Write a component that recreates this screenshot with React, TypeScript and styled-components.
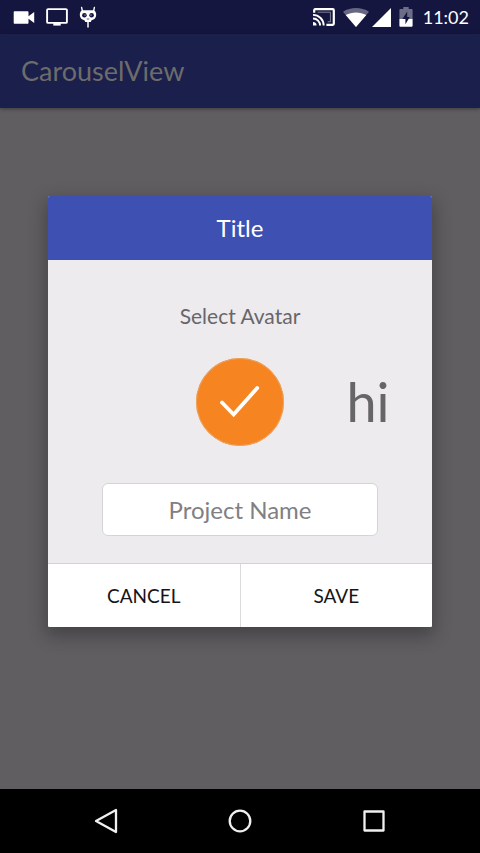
import React from "react";
import styled, { createGlobalStyle } from "styled-components";

const GlobalStyle = createGlobalStyle`
  *, *::before, *::after { box-sizing: border-box; }
  body { margin: 0; background: #000; }
  body, button, input { font-family: Lato, "Open Sans", sans-serif; }
`;

const Screen = styled.div`
  display: flex;
  flex-direction: column;
  min-height: 100vh;
`;

const StatusBar = styled.div`
  display: flex;
  align-items: center;
  justify-content: space-between;
  height: 34px;
  padding: 0 11px 0 13px;
  background: #14163f;
  color: #fff;
`;

const StatusGroup = styled.div<{ $gap: number }>`
  display: flex;
  align-items: center;
  gap: ${({ $gap }) => $gap}px;

  svg {
    display: block;
  }
`;

const Clock = styled.time`
  padding-left: 2px;
  font-size: 18px;
  line-height: 34px;
`;

const AppArea = styled.div`
  position: relative;
  display: flex;
  flex: 1;
  flex-direction: column;
  background: #605e61;
`;

const AppBar = styled.header`
  display: flex;
  align-items: center;
  height: 74px;
  padding: 0 21px;
  background: #1a1f4b;
  box-shadow: 0 1px 4px rgba(0, 0, 0, 0.4);
`;

const AppTitle = styled.h1`
  margin: 0;
  color: #6d6c6b;
  font-size: 27px;
  font-weight: 400;
  line-height: 36px;
`;

const Overlay = styled.div`
  position: absolute;
  inset: 0;
  display: flex;
  align-items: center;
  justify-content: center;
`;

const Dialog = styled.form`
  width: 80%;
  max-width: 480px;
  overflow: hidden;
  border-radius: 2px;
  background: #edebee;
  box-shadow: 0 7px 18px 2px rgba(0, 0, 0, 0.3);
`;

const DialogTitle = styled.h2`
  margin: 0;
  background: #3f50b3;
  color: #fff;
  font-size: 24px;
  font-weight: 400;
  line-height: 64px;
  text-align: center;
`;

const DialogBody = styled.div`
  padding: 42px 0 27px;
`;

const Prompt = styled.p`
  margin: 0 0 28px;
  color: #68666a;
  font-size: 21px;
  line-height: 28px;
  text-align: center;
`;

const Carousel = styled.div`
  display: grid;
  grid-template-columns: repeat(3, 1fr);
  align-items: center;
  justify-items: center;
  height: 88px;
`;

const Avatar = styled.button<{ $column: number }>`
  grid-column: ${({ $column }) => $column};
  padding: 0;
  border: 0;
  background: none;
  color: #666568;
  font-size: 54px;
  line-height: 88px;

  svg {
    display: block;
  }
`;

const NameField = styled.div`
  padding: 37px 54px 0;
`;

const NameInput = styled.input`
  display: block;
  width: 100%;
  height: 53px;
  padding: 0 12px;
  border: 1px solid #d5d3d7;
  border-radius: 6px;
  background: #fff;
  color: #333;
  font-size: 24px;
  text-align: center;

  &::placeholder {
    color: #808083;
    opacity: 1;
  }
`;

const Actions = styled.div`
  display: flex;
  border-top: 1px solid #d3d1d5;
  background: #fff;
`;

const Action = styled.button`
  flex: 1;
  height: 63px;
  padding: 0;
  border: 0;
  background: #fff;
  color: #171418;
  font-size: 19px;

  & + & {
    border-left: 1px solid #dcdadd;
  }
`;

const NavBar = styled.nav`
  display: flex;
  align-items: center;
  justify-content: center;
  height: 64px;
  background: #000;
`;

const NavButton = styled.button`
  display: flex;
  align-items: center;
  justify-content: center;
  width: 28%;
  height: 64px;
  padding: 0;
  border: 0;
  background: none;
  color: #f0f0f0;
`;

const VideoIcon = () => (
  <svg width="22" height="13" viewBox="0 0 22 13" fill="currentColor" aria-hidden="true">
    <path d="M1.7.3h12.8c.6 0 1 .4 1 1v3.9L21.2.9v11.2l-5.7-4.3v3.9c0 .6-.4 1-1 1H1.7c-.6 0-1-.4-1-1V1.3c0-.6.4-1 1-1Z" />
  </svg>
);

const ScreenIcon = () => (
  <svg width="22" height="18" viewBox="0 0 22 18" aria-hidden="true">
    <rect x="1.1" y="1.1" width="19.8" height="13.8" rx="1" fill="none" stroke="currentColor" strokeWidth="1.9" />
    <path d="M7.3 14.6h7.4v3H7.3z" fill="currentColor" />
  </svg>
);

const RobotIcon = () => (
  <svg width="18" height="22" viewBox="0 0 18 22" aria-hidden="true">
    <path d="M2.6 1.4 3.4 5.2M15.4 1.4 14.6 5.2" stroke="currentColor" strokeWidth="1.4" strokeLinecap="round" />
    <path
      fill="currentColor"
      d="M3.4 4.2h11.2c1.5 0 2.6 2.2 2.6 4.6 0 3-1.8 5-4.6 5.5l-.8 1.7H6.2l-.8-1.7C2.6 13.8.8 11.8.8 8.8c0-2.4 1.1-4.6 2.6-4.6Z"
    />
    <circle cx="5.4" cy="9.2" r="2.3" fill="#14163f" />
    <circle cx="12.6" cy="9.2" r="2.3" fill="#14163f" />
    <circle cx="6" cy="9" r=".6" fill="currentColor" />
    <circle cx="12" cy="9" r=".6" fill="currentColor" />
    <path d="M7.8 13h2.4" stroke="#14163f" strokeWidth=".7" />
    <path d="M9 16v5" stroke="currentColor" strokeWidth="1.5" strokeLinecap="round" />
  </svg>
);

const CastIcon = () => (
  <svg width="22" height="18" viewBox="0 0 22 18" fill="none" stroke="currentColor" aria-hidden="true">
    <path d="M1.2 4.8V2.2c0-.6.4-1 1-1h17.6c.6 0 1 .4 1 1v13.6c0 .6-.4 1-1 1h-6.4" strokeWidth="2.2" />
    <path d="M4.6 4.2h12.8v9.6h-2.8" strokeWidth="1" strokeOpacity=".45" />
    <path d="M0 6.9A10.6 10.6 0 0 1 10.7 17.6M0 10.5a7 7 0 0 1 7.1 7.1" strokeWidth="1.9" />
    <path d="M0 14A3.6 3.6 0 0 1 3.6 17.6H0Z" fill="currentColor" stroke="none" />
  </svg>
);

const WifiIcon = () => (
  <svg width="26" height="19" viewBox="0 0 26 19" fill="currentColor" aria-hidden="true">
    <path opacity=".35" d="M13 19 0 3.8C7.5-1.2 18.5-1.2 26 3.8Z" />
    <path d="M13 19 2.7 7C9 3.6 17 3.6 23.3 7Z" />
  </svg>
);

const SignalIcon = () => (
  <svg width="19" height="19" viewBox="0 0 19 19" fill="currentColor" aria-hidden="true">
    <path d="M19 0v19H0Z" />
  </svg>
);

const BatteryIcon = () => (
  <svg width="14" height="20" viewBox="0 0 14 20" aria-hidden="true">
    <path d="M4.3 0h5.4v2h3c.5 0 .9.4.9.9V12H.4V2.9c0-.5.4-.9.9-.9h3Z" fill="#6c6d87" />
    <path d="M.4 12h13.2v6.8c0 .5-.4.9-.9.9H1.3c-.5 0-.9-.4-.9-.9Z" fill="currentColor" />
    <path d="M8.2 4.5 3.4 12h3v5.2l4.4-7.3H8.2Z" fill="#14163f" />
  </svg>
);

const CheckedAvatar = () => (
  <svg width="88" height="88" viewBox="0 0 88 88" aria-hidden="true">
    <circle cx="44" cy="44" r="44" fill="#f58421" />
    <circle cx="44" cy="44" r="43.5" fill="none" stroke="#eba465" />
    <path d="m26 44.5 11.6 12L61.2 30" fill="none" stroke="#fff" strokeWidth="3.8" strokeLinecap="round" />
  </svg>
);

const BackIcon = () => (
  <svg width="24" height="26" viewBox="0 0 24 26" aria-hidden="true">
    <path d="M22 2v22L2 13Z" fill="none" stroke="currentColor" strokeWidth="2.3" strokeLinejoin="round" />
  </svg>
);

const HomeIcon = () => (
  <svg width="24" height="24" viewBox="0 0 24 24" aria-hidden="true">
    <circle cx="12" cy="12" r="10.3" fill="none" stroke="currentColor" strokeWidth="2.3" />
  </svg>
);

const RecentIcon = () => (
  <svg width="22" height="22" viewBox="0 0 22 22" aria-hidden="true">
    <rect x="1.5" y="1.5" width="19" height="19" fill="none" stroke="currentColor" strokeWidth="2.3" strokeLinejoin="round" />
  </svg>
);

export default function App() {
  return (
    <>
      <GlobalStyle />
      <Screen>
        <StatusBar>
          <StatusGroup $gap={11}>
            <VideoIcon />
            <ScreenIcon />
            <RobotIcon />
          </StatusGroup>
          <StatusGroup $gap={8}>
            <CastIcon />
            <StatusGroup $gap={3}>
              <WifiIcon />
              <SignalIcon />
            </StatusGroup>
            <BatteryIcon />
            <Clock>11:02</Clock>
          </StatusGroup>
        </StatusBar>
        <AppArea>
          <AppBar>
            <AppTitle>CarouselView</AppTitle>
          </AppBar>
          <Overlay>
            <Dialog role="dialog" aria-labelledby="dialog-title" onSubmit={(e) => e.preventDefault()}>
              <DialogTitle id="dialog-title">Title</DialogTitle>
              <DialogBody>
                <Prompt>Select Avatar</Prompt>
                <Carousel>
                  <Avatar type="button" $column={2} aria-label="Selected avatar" aria-pressed="true">
                    <CheckedAvatar />
                  </Avatar>
                  <Avatar type="button" $column={3}>hi</Avatar>
                </Carousel>
                <NameField>
                  <NameInput type="text" aria-label="Project Name" placeholder="Project Name" />
                </NameField>
              </DialogBody>
              <Actions>
                <Action type="button">CANCEL</Action>
                <Action type="submit">SAVE</Action>
              </Actions>
            </Dialog>
          </Overlay>
        </AppArea>
        <NavBar aria-label="System navigation">
          <NavButton type="button" aria-label="Back"><BackIcon /></NavButton>
          <NavButton type="button" aria-label="Home"><HomeIcon /></NavButton>
          <NavButton type="button" aria-label="Recent apps"><RecentIcon /></NavButton>
        </NavBar>
      </Screen>
    </>
  );
}
